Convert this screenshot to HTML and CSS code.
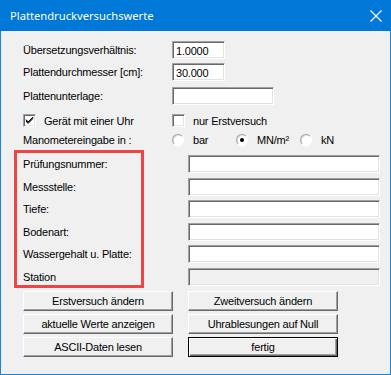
FILE: index.html
```html
<!DOCTYPE html>
<html lang="de">
<head>
    <meta charset="UTF-8">
    <meta name="viewport" content="width=device-width, initial-scale=1.0">
    <title>Plattendruckversuchswerte</title>
    <link rel="stylesheet" href="styles.css">
</head>
<body>
    <div class="window">
        <!-- Titelleiste -->
        <div class="titlebar">
            <span class="title">Plattendruckversuchswerte</span>
            <svg class="close" width="12" height="12" viewBox="0 0 12 12">
                <path d="M0.5 0.5 L11.5 11.5 M11.5 0.5 L0.5 11.5" stroke="#fff" stroke-width="1.1" fill="none"/>
            </svg>
        </div>

        <div class="content">
            <div class="row row-1">
                <label class="lbl">Übersetzungsverhältnis:</label>
                <input class="field short" type="text" value="1.0000">
            </div>
            <div class="row row-2">
                <label class="lbl">Plattendurchmesser [cm]:</label>
                <input class="field short" type="text" value="30.000">
            </div>
            <div class="row row-3">
                <label class="lbl">Plattenunterlage:</label>
                <input class="field medium" type="text" value="">
            </div>

            <div class="row check-row">
                <div class="lbl check-item">
                    <span class="checkbox">
                        <svg width="9" height="9" viewBox="0 0 9 9">
                            <path d="M1 4 L3 6.5 L8 1.5 M1 5 L3 7.5 L8 2.5 M1 3.5 L3 6 L8 1" stroke="#000" stroke-width="1" fill="none"/>
                        </svg>
                    </span>
                    <span>Gerät mit einer Uhr</span>
                </div>
                <div class="check-item">
                    <span class="checkbox"></span>
                    <span>nur Erstversuch</span>
                </div>
            </div>

            <div class="row radio-row">
                <label class="lbl">Manometereingabe in :</label>
                <div class="radio-item"><span class="radio"></span>bar</div>
                <div class="radio-item"><span class="radio checked"></span>MN/m²</div>
                <div class="radio-item"><span class="radio"></span>kN</div>
            </div>

            <!-- Markierter Bereich -->
            <div class="details">
                <div class="marked">
                    <div class="d-label">Prüfungsnummer:</div>
                    <div class="d-label">Messstelle:</div>
                    <div class="d-label">Tiefe:</div>
                    <div class="d-label">Bodenart:</div>
                    <div class="d-label">Wassergehalt u. Platte:</div>
                    <div class="d-label">Station</div>
                </div>
                <div class="d-fields">
                    <input class="field wide" type="text">
                    <input class="field wide" type="text">
                    <input class="field wide" type="text">
                    <input class="field wide" type="text">
                    <input class="field wide" type="text">
                    <input class="field wide disabled" type="text" disabled>
                </div>
            </div>

            <div class="buttons">
                <button class="btn">Erstversuch ändern</button>
                <button class="btn">Zweitversuch ändern</button>
                <button class="btn">aktuelle Werte anzeigen</button>
                <button class="btn">Uhrablesungen auf Null</button>
                <button class="btn">ASCII-Daten lesen</button>
                <button class="btn default">fertig</button>
            </div>
        </div>
    </div>
</body>
</html>
```

FILE: styles.css
```css
body {
    margin: 0;
    padding: 0;
    background-color: #f0f0f0;
    font-family: "Liberation Sans", Arial, sans-serif;
    font-size: 11px;
    letter-spacing: -0.2px;
    color: #000;
}
.window {
    width: 391px;
    height: 375px;
    box-sizing: border-box;
    border: 1px solid #1883d7;
    border-top: none;
    background-color: #f0f0f0;
    display: flex;
    flex-direction: column;
}
.titlebar {
    height: 31px;
    margin: 0 -1px;
    background-color: #0078d7;
    color: #fff;
    display: flex;
    align-items: center;
    justify-content: space-between;
    padding: 0 9px 0 10px;
    flex-shrink: 0;
}
.title {
    font-family: "Noto Sans", "Open Sans", sans-serif;
    font-size: 11.2px;
    letter-spacing: 0;
}
.close {
    display: block;
}
.content {
    padding: 10px 0 0 22px;
}
.row {
    display: flex;
    align-items: center;
}
.lbl {
    width: 149px;
    flex-shrink: 0;
}
.row-1 { height: 18px; margin-bottom: 4px; }
.row-2 { height: 18px; margin-bottom: 6px; }
.row-3 { height: 18px; margin-bottom: 8px; }
.check-row { height: 15px; margin-bottom: 3px; }
.radio-row { height: 18px; margin-bottom: 1px; }

.field {
    box-sizing: border-box;
    height: 18px;
    margin: 0;
    padding: 1px 3px 0;
    border: 1px solid;
    border-color: #a0a0a0 #ffffff #ffffff #a0a0a0;
    box-shadow: inset 1px 1px 0 #696969, inset -1px -1px 0 #e3e3e3;
    background-color: #fff;
    font-family: inherit;
    font-size: 11px;
    letter-spacing: -0.2px;
    color: #000;
    outline: none;
}
.short { width: 53px; }
.medium { width: 102px; }
.wide { width: 192px; }
.field.disabled { background-color: #f0f0f0; }

.check-item {
    display: flex;
    align-items: center;
}
.checkbox {
    box-sizing: border-box;
    width: 13px;
    height: 13px;
    border: 1px solid;
    border-color: #a0a0a0 #ffffff #ffffff #a0a0a0;
    box-shadow: inset 1px 1px 0 #696969, inset -1px -1px 0 #e3e3e3;
    background-color: #fff;
    display: flex;
    align-items: center;
    justify-content: center;
    margin-right: 8px;
}
.checkbox svg { display: block; }

.radio-item {
    display: flex;
    align-items: center;
    width: 64px;
}
.radio {
    box-sizing: border-box;
    width: 12px;
    height: 12px;
    border-radius: 50%;
    border: 1px solid;
    border-color: #a0a0a0 #ffffff #ffffff #a0a0a0;
    box-shadow: inset 1px 1px 0 #e3e3e3;
    background-color: #fff;
    margin-right: 9px;
    display: flex;
    align-items: center;
    justify-content: center;
}
.radio.checked::after {
    content: "";
    width: 4px;
    height: 4px;
    border-radius: 50%;
    background-color: #000;
}

.details {
    display: flex;
    margin-left: -9px;
}
.marked {
    box-sizing: border-box;
    width: 130px;
    height: 138px;
    border: 3px solid #ef4444;
    padding: 2px 0 0 6px;
    display: flex;
    flex-direction: column;
    gap: 4.6px;
}
.d-label {
    height: 18px;
    line-height: 18px;
    white-space: nowrap;
}
.d-fields {
    margin-left: 44px;
    padding-top: 5px;
    display: flex;
    flex-direction: column;
    gap: 4.6px;
}

.buttons {
    margin-top: 3px;
    display: grid;
    grid-template-columns: 150px 150px;
    column-gap: 15px;
    row-gap: 3px;
}
.btn {
    box-sizing: border-box;
    height: 20px;
    margin: 0;
    padding: 0;
    border: 1px solid;
    border-color: #ffffff #696969 #696969 #ffffff;
    box-shadow: inset -1px -1px 0 #a0a0a0;
    background-color: #f0f0f0;
    font-family: inherit;
    font-size: 11px;
    letter-spacing: -0.2px;
    color: #000;
}
.btn.default {
    border-color: #000;
    box-shadow: inset 1px 1px 0 #fff, inset -1px -1px 0 #696969, inset -2px -2px 0 #a0a0a0;
}
```
